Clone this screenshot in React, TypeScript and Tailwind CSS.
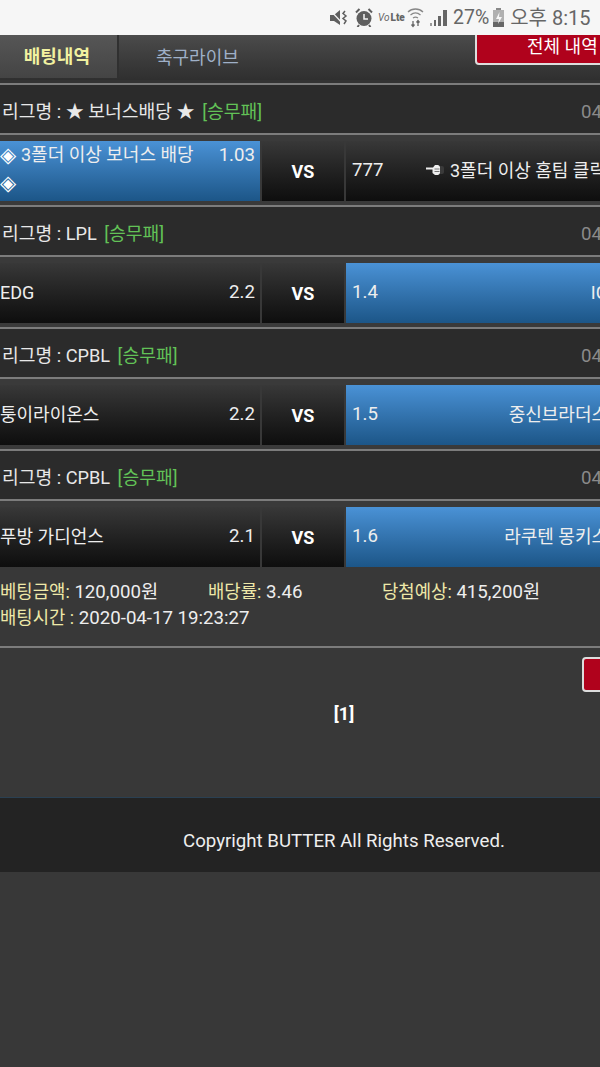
import React from 'react';

const FONT = { fontFamily: 'Roboto, "Noto Sans CJK KR", sans-serif' };

interface Match {
  league: string;
  left: string;
  leftOdds: string;
  leftOn?: boolean;
  bonus?: boolean;
  rightOdds: string;
  right: string;
  rightOn?: boolean;
  pointer?: boolean;
}

const MATCHES: Match[] = [
  { league: '★ 보너스배당 ★', left: '3폴더 이상 보너스 배당', bonus: true, leftOdds: '1.03', leftOn: true, rightOdds: '777', right: '3폴더 이상 홈팀 클릭', pointer: true },
  { league: 'LPL', left: 'EDG', leftOdds: '2.2', rightOdds: '1.4', right: 'IG', rightOn: true },
  { league: 'CPBL', left: '퉁이라이온스', leftOdds: '2.2', rightOdds: '1.5', right: '중신브라더스', rightOn: true },
  { league: 'CPBL', left: '푸방 가디언스', leftOdds: '2.1', rightOdds: '1.6', right: '라쿠텐 몽키스', rightOn: true },
];

const StatusBar = () => (
  <div className="h-[35px] bg-[#f6f6f6] flex items-center pl-[330px] text-[#666666] text-[20px]">
    {/* vibrate mode */}
    <svg width="20" height="18" viewBox="0 0 20 18" fill="#5f5f5f">
      <path d="M0 6h4l6-5v15l-6-4H0z" />
      <path d="M0 1l14 15" stroke="#f6f6f6" strokeWidth="1.2" />
      <path d="M15 2l-2 2.500 3 2.500-3 2.500 3 2.500-2 3" fill="none" stroke="#5f5f5f" strokeWidth="1.5" />
    </svg>
    {/* alarm */}
    <svg width="18" height="19" viewBox="0 0 18 19" className="ml-[5px]">
      <circle cx="9" cy="10.500" r="7.500" fill="#5f5f5f" />
      <path d="M9 6v5h4" fill="none" stroke="#f6f6f6" strokeWidth="1.500" />
      <path d="M1 4.500l3.500-3.500M17 4.500l-3.500-3.500M4 17l-1.500 2M14 17l1.500 2" stroke="#5f5f5f" strokeWidth="2" />
    </svg>
    <span className="ml-[5px] w-[24px] flex items-baseline text-[#666666] leading-none">
      <span className="text-[10px] italic">Vo</span>
      <span className="text-[10px] font-black ml-[1px]">Lte</span>
    </span>
    {/* wifi with up/down arrows */}
    <svg width="17" height="21" viewBox="0 0 17 21" fill="none" stroke="#888888" strokeWidth="1.3" className="ml-[5px]">
      <path d="M1 5c4-4 11-4 15 0M3.500 8c3-2.500 7-2.500 10 0M6 11c1.500-1 3.500-1 5 0" />
      <path d="M6 14v5M4.500 17.500l1.500 2 1.500-2M11 19v-5M9.500 15.500l1.500-2 1.500 2" stroke="#666666" />
    </svg>
    <svg width="17" height="18" viewBox="0 0 17 18" fill="#666666" className="ml-[6px]">
      <rect x="0" y="14" width="2" height="3" fill="#999999" />
      <rect x="4" y="11" width="2" height="6" />
      <rect x="8" y="7" width="3" height="10" />
      <rect x="13" y="1" width="4" height="16" />
    </svg>
    <span className="ml-[6px] text-[19.500px]">27%</span>
    <svg width="11" height="19" viewBox="0 0 11 19" className="ml-[4px]">
      <rect x="3" y="0" width="5" height="2" fill="#888888" />
      <rect x="0" y="2" width="11" height="17" fill="#b0b0b0" />
      <rect x="0" y="14" width="11" height="5" fill="#666666" />
      <path d="M6.500 4L3 11h3l-1 5 4-7H6z" fill="#f6f6f6" />
    </svg>
    <span className="ml-[6px] whitespace-nowrap">오후 8:15</span>
  </div>
);

const MatchRow = ({ m }: { m: Match }) => {
  const on = 'bg-gradient-to-b from-[#4a92d6] to-[#1c5688]';
  const off = 'bg-gradient-to-b from-[#383838] to-[#0e0e0e]';
  return (
    <div className="flex h-[60px] text-[#eeeeee] text-[18px] whitespace-nowrap">
      <div className={`w-[282px] pl-[22px] pr-[5px] flex justify-between ${m.bonus ? 'leading-[28px]' : 'items-center pb-[2px]'} ${m.leftOn ? on : off}`}>
        {m.bonus ? (
          <div>
            <div className="flex items-center gap-[5px]"><span className="text-[21px] leading-[28px] text-white">◈</span>{m.left}</div>
            <div className="text-[21px] leading-[28px] text-white">◈</div>
          </div>
        ) : (
          <div>{m.left}</div>
        )}
        <div className="text-[18.670px]">{m.leftOdds}</div>
      </div>
      <div className={`ml-[2px] w-[82px] flex items-center justify-center font-bold text-white text-[18px] ${off}`}>VS</div>
      <div className={`ml-[2px] flex-1 pl-[6px] pb-[2px] flex items-center justify-between ${m.rightOn ? on : off}`}>
        <span className="text-[18.670px]">{m.rightOdds}</span>
        <span className={`flex items-center gap-[6px] ${m.pointer ? 'mr-[32px]' : 'mr-[30px]'}`}>
          {m.pointer && (
            <svg width="18" height="12" viewBox="0 0 18 12">
              <rect x="13" y="2" width="5" height="8" rx="2" fill="#3a3a3a" />
              <path d="M0 3.500h7l2-2.500h3a3 3 0 0 1 2 2v6a3 3 0 0 1-2 2H9L6.500 9V5.500H0z" fill="#eeeeee" />
              <path d="M8.500 5h5M8.500 7.500h5" stroke="#555555" strokeWidth="0.800" />
            </svg>
          )}
          {m.right}
        </span>
      </div>
    </div>
  );
};

export default function App() {
  return (
    <div style={FONT} className="min-h-[1067px] bg-[#383838] overflow-hidden">
      <StatusBar />
      <div className="w-[660px] ml-[-22px]">
        <div className="h-[45px] flex bg-gradient-to-b from-[#4b4b4b] to-[#2f2f2f] whitespace-nowrap">
          <div className="w-[141px] h-[43px] bg-gradient-to-b from-[#565656] to-[#444444] border-r-2 border-[#303030] flex items-center justify-end pr-[27px] text-[#f1f1a0] font-bold text-[18px]">
            배팅내역
          </div>
          <div className="ml-[37px] flex items-center text-[#9fb0c8] text-[18px] h-[45px]">축구라이브</div>
          <div className="ml-auto mr-[-1px] w-[164px] h-[30px] bg-[#b0021c] border-2 border-t-0 border-[#dddddd] rounded-bl-[4px] text-white text-[18px] leading-[24px] pl-[50px]">
            전체 내역
          </div>
        </div>
        <div className="h-[3px] bg-[#333333]" />

        {MATCHES.map((m, i) => (
          <div key={i}>
            <div className="h-[2px] bg-[#7c7c7c]" />
            <div className="h-[48px] bg-[#2b2b2b] flex items-center justify-between pl-[24px] pt-[6px] text-[#e8e8e8] text-[18.200px] whitespace-nowrap">
              <span>
                리그명 : {m.league} <span className="ml-[3px] text-[#62c257]">[승무패]</span>
              </span>
              <span className="text-[#8a8a8a] text-[18.670px] w-[57px]">04</span>
            </div>
            <div className="h-[2px] bg-[#7c7c7c]" />
            <div className="h-[6px] bg-[#3a3a3a]" />
            <MatchRow m={m} />
            {i < 3 && <div className="h-[4px] bg-[#3a3a3a]" />}
          </div>
        ))}

        <div className="pl-[22px] pt-[12px] text-[18.670px] text-[#eeeeee] leading-[26px] whitespace-nowrap">
          <div className="flex">
            <span className="w-[208px]"><span className="text-[#eee8a8] text-[17.800px]">베팅금액:</span> 120,000원</span>
            <span className="w-[174px]"><span className="text-[#eee8a8] text-[17.800px]">배당률:</span> 3.46</span>
            <span><span className="text-[#eee8a8] text-[17.800px]">당첨예상:</span> 415,200원</span>
          </div>
          <div><span className="text-[#eee8a8] text-[17.800px]">배팅시간 :</span> 2020-04-17 19:23:27</div>
        </div>
        <div className="h-[2px] bg-[#7c7c7c] mt-[15px]" />

        <div className="h-[149px]">
          <div className="flex justify-end pr-[16px] pt-[9px]">
            <div className="w-[40px] h-[35px] bg-[#b0021c] border-2 border-[#dddddd] rounded-[4px]" />
          </div>
          <div className="text-center font-bold text-white text-[18px] mt-[8px] pl-[72px]">[1]</div>
        </div>
        <div className="h-[1px] bg-[#2a4052]" />
        <div className="h-[74px] bg-[#232323] flex items-center pl-[205px] pt-[11px] text-[#eeeeee] text-[18.670px]">
          Copyright BUTTER All Rights Reserved.
        </div>
      </div>
    </div>
  );
}
